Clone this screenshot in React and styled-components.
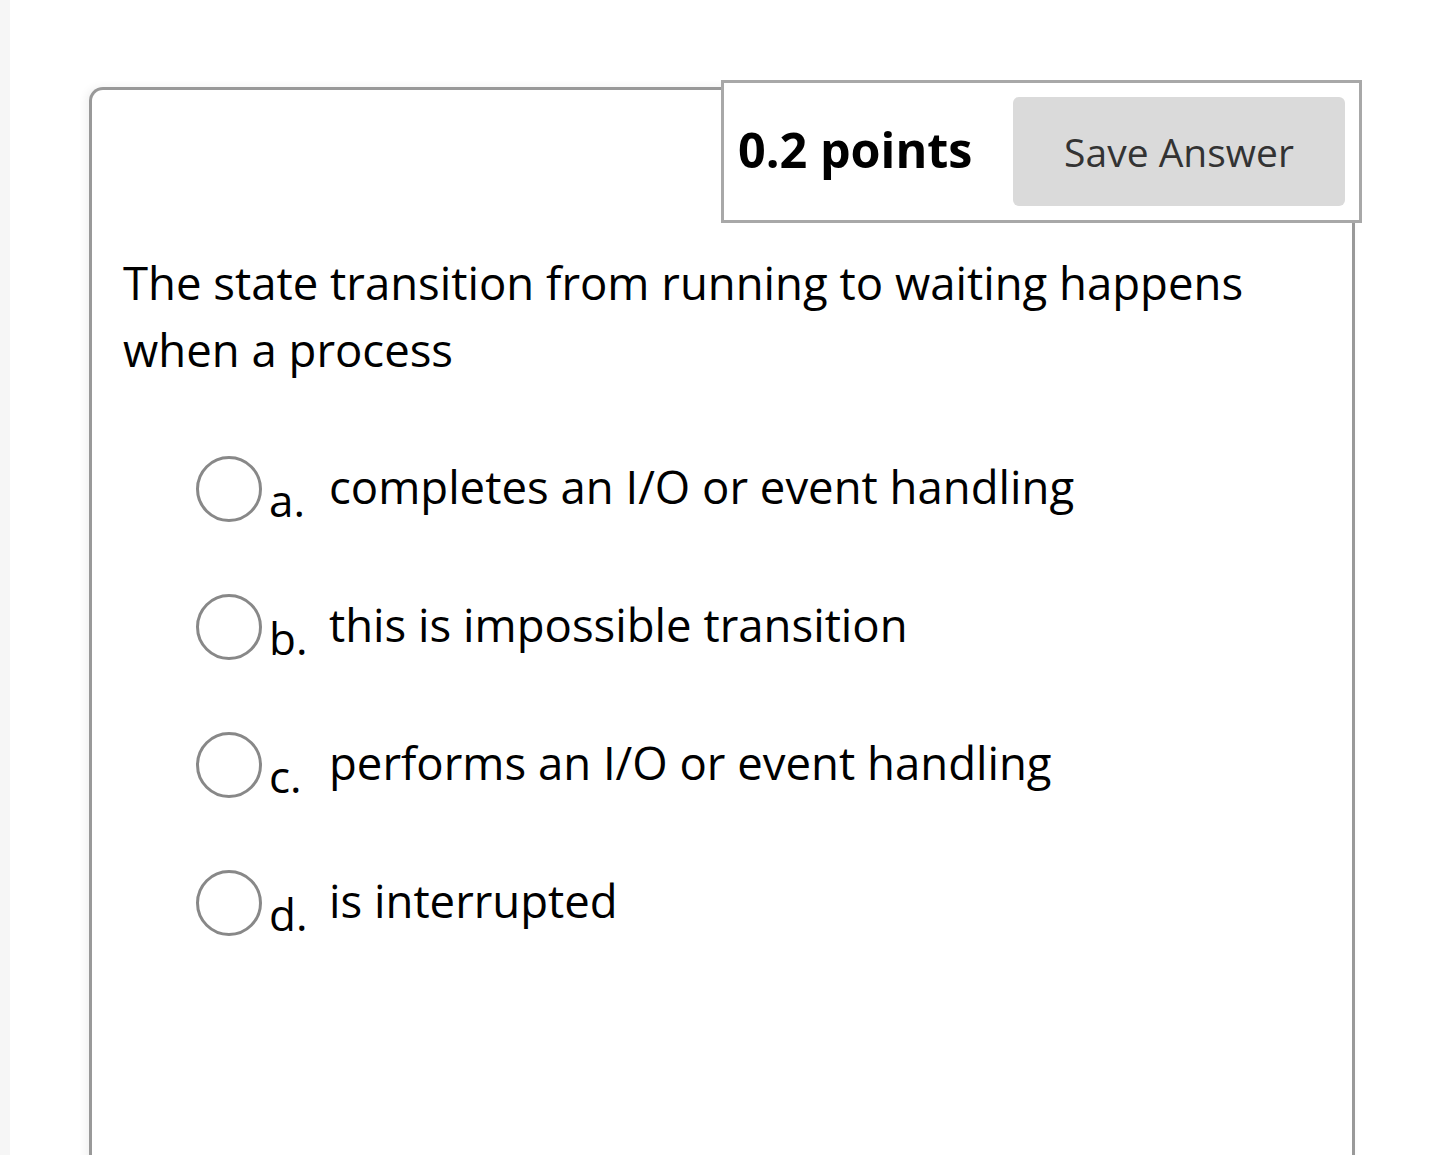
import styled, { createGlobalStyle } from "styled-components";

const GlobalStyle = createGlobalStyle`
body {
    margin: 0;
    background: white;
    font-family: "Open Sans", "Noto Sans", sans-serif;
    color: black;
}
`;

const Page = styled.div`
min-height: 1155px;
border-left: 10px solid #f6f6f6;
padding: 87px 0 0 79px;
box-sizing: border-box;
overflow: hidden;
`;

const Card = styled.div`
position: relative;
width: 1266px;
min-height: 1100px;
box-sizing: border-box;
border: 3px solid #999;
border-bottom: none;
border-radius: 14px 14px 0 0;
box-shadow: -3px 0 8px rgba(0, 0, 0, 0.06);
padding: 159px 0 0 31px;
`;

const Header = styled.div`
position: absolute;
top: -10px;
right: -10px;
width: 641px;
height: 143px;
box-sizing: border-box;
background: white;
border: 3px solid #a8a8a8;
display: flex;
align-items: center;
justify-content: space-between;
padding: 0 14px;
`;

const Points = styled.span`
font-size: 48.5px;
font-weight: 700;
margin-top: -6px;
`;

const SaveButton = styled.button`
width: 332px;
height: 109px;
border: none;
border-radius: 6px;
background: #dadada;
color: #333;
font-family: "Open Sans", "Noto Sans", sans-serif;
font-size: 39px;
cursor: pointer;
`;

const Question = styled.p`
margin: 0;
font-size: 45.5px;
line-height: 67px;
width: 1180px;
`;

const Options = styled.div`
display: flex;
flex-direction: column;
gap: 78px;
margin: 73px 0 0 73px;
`;

const Row = styled.label`
display: flex;
align-items: flex-start;
height: 60px;
font-size: 45.5px;
line-height: 60px;
cursor: pointer;
`;

const Radio = styled.span`
width: 66px;
height: 66px;
box-sizing: border-box;
border: 3px solid #888;
border-radius: 50%;
flex: none;
`;

const Letter = styled.span`
width: 60px;
padding: 14px 0 0 7px;
font-size: 44px;
flex: none;
`;

const options = [
    { letter: "a.", text: "completes an I/O or event handling" },
    { letter: "b.", text: "this is impossible transition" },
    { letter: "c.", text: "performs an I/O or event handling" },
    { letter: "d.", text: "is interrupted" },
];

export default function App()
{
    return(
        <>
        <GlobalStyle/>
        <Page>
            <Card>
                <Header>
                    <Points>0.2 points</Points>
                    <SaveButton>Save Answer</SaveButton>
                </Header>
                <Question>The state transition from running to waiting happens when a process</Question>
                <Options>
                    { options.map((o) => (
                        <Row key={ o.letter }>
                            <Radio/>
                            <Letter>{ o.letter }</Letter>
                            <span>{ o.text }</span>
                        </Row>
                    )) }
                </Options>
            </Card>
        </Page>
        </>
    );
}
